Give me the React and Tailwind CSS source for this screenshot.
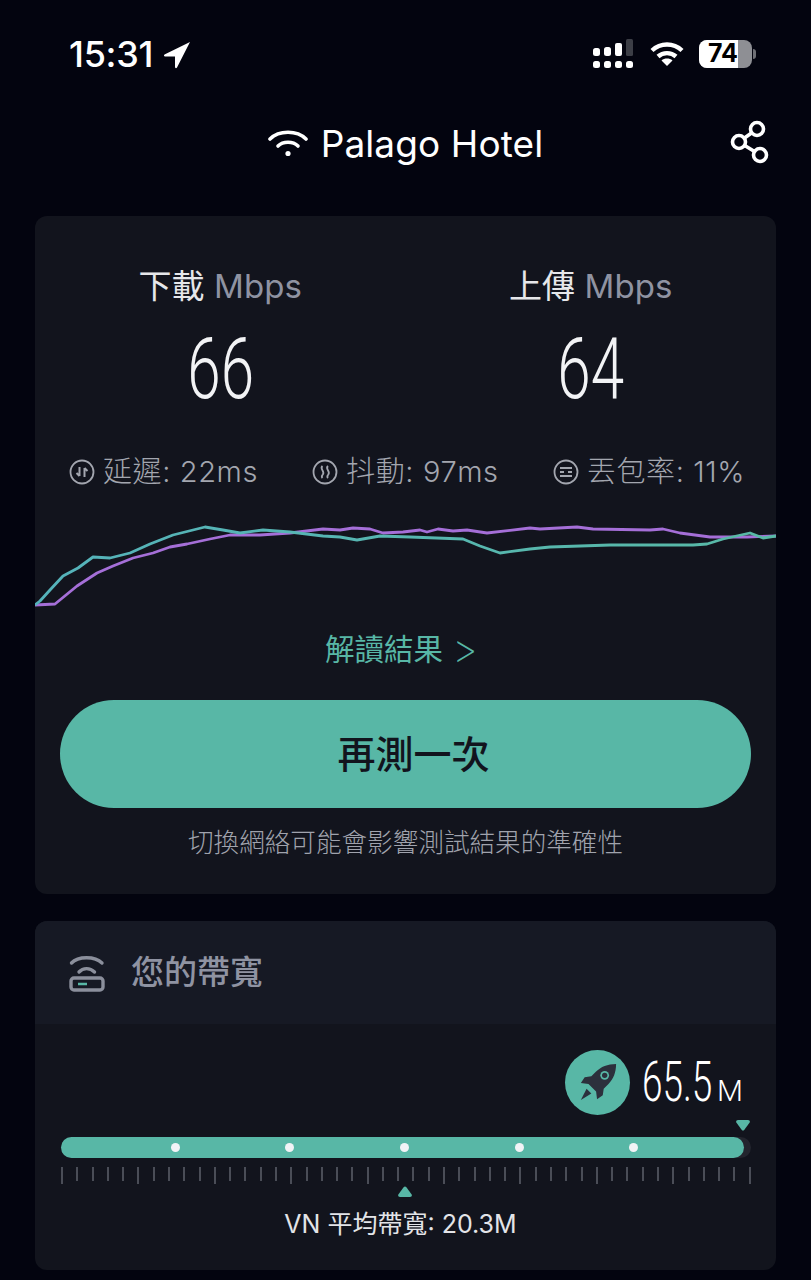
const TEAL_LINE = '35,604 40,600 50,589 63,575 78,567 93,556 110,557 130,552 150,543 173,534 205,526 223,529 240,532 263,529 290,531 323,535 340,536 357,539 380,535 410,536 463,538 480,545 500,552 530,548 550,546 610,544 693,544 707,543 723,538 750,532 763,537 776,535'
const PURPLE_LINE = '35,604 55,603 77,585 97,572 113,565 133,557 153,552 170,546 187,543 210,538 230,534 260,534 290,532 323,528 340,529 353,527 370,528 383,532 403,531 420,529 427,531 438,528 453,530 467,529 487,532 530,527 540,528 577,526 593,528 650,529 663,528 680,532 710,536 747,536 776,535'

const TICKS = Array.from({ length: 46 }, (_, i) => i)

function SignalIcon() {
  return (
    <svg width="40" height="29" viewBox="0 0 40 29">
      <rect x="0" y="9" width="7" height="8" rx="2.5" fill="#fff" />
      <rect x="11" y="8" width="7" height="9" rx="2.5" fill="#fff" />
      <rect x="22" y="4" width="7" height="13" rx="2" fill="#fff" />
      <rect x="33" y="0" width="7" height="17" rx="1.5" fill="#3c3e46" />
      <rect x="0" y="22" width="7" height="7" rx="2.5" fill="#fff" />
      <rect x="11" y="22" width="7" height="7" rx="2.5" fill="#fff" />
      <rect x="22" y="22" width="7" height="7" rx="2.5" fill="#fff" />
      <rect x="33" y="22" width="7" height="7" rx="2.5" fill="#fff" />
    </svg>
  )
}

function StatusWifi() {
  return (
    <svg width="34" height="24" viewBox="0 0 34 24" fill="none" stroke="#fff" strokeWidth="4.4">
      <path d="M2 8.5C10.5 .5 23.5 .5 32 8.5" />
      <path d="M8 14.5C13 10 21 10 26 14.5" />
      <path d="M17 24l-5.5-5.5c3-2.6 8-2.6 11 0z" fill="#fff" stroke="none" />
    </svg>
  )
}

function ShareIcon() {
  return (
    <svg width="40" height="44" viewBox="0 0 40 44" fill="none" stroke="#fff" strokeWidth="3.6">
      <circle cx="27" cy="9" r="6.5" />
      <circle cx="9" cy="22" r="6.5" />
      <circle cx="30" cy="35" r="6.5" />
      <path d="M21.5 13L14.5 18M14.7 25.5L24.5 31.5" />
    </svg>
  )
}

function LatencyIcon() {
  return (
    <svg width="26" height="26" viewBox="0 0 26 26" fill="none" stroke="#a3a6af" strokeWidth="1.8">
      <circle cx="13" cy="13" r="11.5" />
      <path d="M10.5 8v9M10.5 17l-3-3M15.5 18V9M15.5 9l3 3" strokeWidth="2" />
    </svg>
  )
}

function JitterIcon() {
  return (
    <svg width="26" height="26" viewBox="0 0 26 26" fill="none" stroke="#a3a6af" strokeWidth="1.8">
      <circle cx="13" cy="13" r="11.5" />
      <path d="M10.5 7c-3.500 3 3 5 .3 8.500-1 1.200-1.300 2.500-.3 3.500M16 7c-3.500 3 3 5 .3 8.500-1 1.200-1.300 2.500-.3 3.500" />
    </svg>
  )
}

function LossIcon() {
  return (
    <svg width="26" height="26" viewBox="0 0 26 26" fill="none" stroke="#a3a6af" strokeWidth="1.8">
      <circle cx="13" cy="13" r="11.5" />
      <path d="M7 9h12M7 13h4M15 13h4M7 17h12" />
    </svg>
  )
}

function RouterIcon() {
  return (
    <svg width="36" height="38" viewBox="0 0 36 38" fill="none" stroke="#8b8f9c" strokeWidth="3.4">
      <path d="M2.500 9C9 2 26 2 33 9" strokeLinecap="round" />
      <path d="M10 18C14 13.500 21 13.500 25.500 18" strokeLinecap="round" />
      <rect x="2" y="24" width="32" height="12" rx="3" />
      <path d="M9 30h9" stroke="#58b7a6" strokeWidth="2.600" />
    </svg>
  )
}

function RocketBadge() {
  return (
    <div className="flex h-[65px] w-[65px] items-center justify-center rounded-full bg-[#58b7a6]">
      <svg width="40" height="40" viewBox="0 0 42 42">
        <path d="M40 2C31 2 24 5 19 10L14 15 7 16 3 22 11 23 19 31 20 39 26 35 27 28 32 23C37 18 40 11 40 2Z" fill="#2c303c" />
        <path d="M9 28l5 5-11 7z" fill="#2c303c" />
        <circle cx="28" cy="14" r="4.600" fill="#58b7a6" />
        <circle cx="28" cy="14" r="2.800" fill="#2c303c" />
      </svg>
    </div>
  )
}

export default function App() {
  return (
    <div className="h-[1280px] overflow-hidden bg-[#03040f] font-['Inter','Noto_Sans_CJK_TC',sans-serif] text-white">
      {/* status bar */}
      <div className="flex h-[96px] items-start justify-between pl-[69px] pr-[55px] pt-[39px]">
        <div className="flex items-center gap-[10px]">
          <span className="text-[36px] font-medium leading-[30px] tracking-[-0.3px]">15:31</span>
          <svg width="28" height="28" viewBox="0 0 28 28" className="mt-[2px]">
            <path d="M27 1L1.500 13.500c-1 .8-.5 2 .5 2H12V26c0 1.500 1.500 1.500 2 .5z" fill="#fff" />
          </svg>
        </div>
        <div className="flex items-center">
          <SignalIcon />
          <div className="ml-[17px]"><StatusWifi /></div>
          <div className="ml-[15px] flex h-[28px] w-[53px] overflow-hidden rounded-[8px] bg-[#8e8f94]">
            <div className="flex h-full w-[39px] items-center bg-white pl-[9px]">
              <span className="text-[25px] font-bold leading-none text-black">74</span>
            </div>
          </div>
          <div className="ml-[1px] h-[10px] w-[3px] rounded-r-full bg-[#6f7076]" />
        </div>
      </div>

      {/* title */}
      <div className="relative mb-[26px] flex h-[94px] items-center justify-center">
        <div className="flex items-center gap-[13px]">
          <svg width="40" height="28" viewBox="0 0 40 28" fill="none" stroke="#fff" strokeWidth="3.600" strokeLinecap="round">
            <path d="M2 10C11 1 29 1 38 10" />
            <path d="M10 17C15 12 25 12 30 17" />
            <circle cx="20" cy="24.500" r="2.600" fill="#fff" stroke="none" />
          </svg>
          <span className="text-[37px] font-normal leading-none tracking-[0.1px]">Palago Hotel</span>
        </div>
        <div className="absolute right-[41px] top-[24px]"><ShareIcon /></div>
      </div>

      {/* result card */}
      <div className="mx-[35px] h-[678px] rounded-[12px] bg-[#12141d] pt-[51px]">
        <div className="grid grid-cols-2">
          <div className="flex flex-col items-center">
            <div className="text-[33px] leading-[38px] tracking-[0.1px] text-[#e6e7ea]">下載 <span className="text-[#8f93a2]">Mbps</span></div>
            <div className="mt-[20px] origin-center scale-x-[0.7] font-['Roboto',sans-serif] text-[86px] font-[350] leading-[88px] text-[#f2f3f5]">66</div>
          </div>
          <div className="flex flex-col items-center">
            <div className="text-[33px] leading-[38px] tracking-[0.1px] text-[#e6e7ea]">上傳 <span className="text-[#8f93a2]">Mbps</span></div>
            <div className="mt-[20px] origin-center scale-x-[0.7] font-['Roboto',sans-serif] text-[86px] font-[350] leading-[88px] text-[#f2f3f5]">64</div>
          </div>
        </div>

        <div className="mt-[41px] flex items-center justify-between pl-[34px] pr-[31px] text-[29px] font-light leading-[36px] tracking-[0.6px] text-[#a3a6af]">
          <div className="flex items-center gap-[8px]"><LatencyIcon /><span>延遲: 22ms</span></div>
          <div className="flex items-center gap-[8px]"><JitterIcon /><span>抖動: 97ms</span></div>
          <div className="flex items-center gap-[8px]"><LossIcon /><span>丟包率: 11%</span></div>
        </div>

        <svg viewBox="35 520 741 90" className="mt-[31px] block h-[90px] w-full" fill="none" strokeWidth="2.800" strokeLinejoin="round">
          <defs>
            <linearGradient id="tealLine" gradientUnits="userSpaceOnUse" x1="35" y1="0" x2="776" y2="0">
              <stop offset="0" stopColor="#55b3bb" />
              <stop offset="1" stopColor="#58b9a6" />
            </linearGradient>
          </defs>
          <polyline points={PURPLE_LINE} stroke="#a56fd8" />
          <polyline points={TEAL_LINE} stroke="url(#tealLine)" />
        </svg>

        <div className="mt-[19px] flex h-[38px] items-center justify-center gap-[9px] pr-[8px] leading-[38px] text-[#58b7a6]">
          <span className="text-[29.5px]">解讀結果</span>
          <span className="text-[40px] font-extralight">&gt;</span>
        </div>

        <div className="mx-[25px] mt-[32px] flex h-[108px] items-center justify-center rounded-full bg-[#58b7a6] pl-[16px] text-[38px] font-medium text-[#12141d]">再測一次</div>

        <div className="mt-[18px] text-center text-[25.6px] font-light leading-[34px] text-[#a0a3ad]">切換網絡可能會影響測試結果的準確性</div>
      </div>

      {/* bandwidth card */}
      <div className="mx-[35px] mt-[27px] h-[349px] overflow-hidden rounded-[12px] bg-[#12141d]">
        <div className="flex h-[103px] items-center gap-[26px] bg-[#161924] pl-[34px]">
          <RouterIcon />
          <span className="text-[33px] font-medium text-[#8f93a2]">您的帶寬</span>
        </div>

        <div className="px-[26px]">
          <div className="mt-[25px] flex h-[66px] items-center justify-end">
            <RocketBadge />
            <div className="ml-[12px] flex w-[108px] items-baseline">
              <span className="block w-[75px] origin-left scale-x-[0.66] whitespace-nowrap font-['Roboto',sans-serif] text-[56px] font-[350] leading-[56px]">65.5</span>
              <span className="font-['Roboto',sans-serif] text-[30px] font-[350] leading-none">M</span>
            </div>
          </div>

          <div className="flex h-[22px] justify-end pt-[5px]">
            <svg width="14" height="11" viewBox="0 0 14 11"><path d="M2 0h10c1.600 0 2.400 1.500 1.500 2.800L8.200 10c-.6 .8-1.800 .8-2.400 0L.5 2.800C-.4 1.500 .4 0 2 0z" fill="#58b7a6" /></svg>
          </div>

          <div className="flex h-[21px] w-[690px] rounded-full bg-[#23252e]">
            <div className="flex h-full w-[683px] items-center justify-evenly rounded-full bg-[#58b7a6] pl-[4px]">
              <span className="h-[9px] w-[9px] rounded-full bg-[#f1f3f6]" />
              <span className="h-[9px] w-[9px] rounded-full bg-[#f1f3f6]" />
              <span className="h-[9px] w-[9px] rounded-full bg-[#f1f3f6]" />
              <span className="h-[9px] w-[9px] rounded-full bg-[#f1f3f6]" />
              <span className="h-[9px] w-[9px] rounded-full bg-[#f1f3f6]" />
            </div>
          </div>

          <div className="mt-[9px] flex w-[690px] items-start justify-between">
            {TICKS.map(i => (
              <span key={i} className={i % 5 === 0 ? 'h-[17px] w-[2px] bg-[#4a4d57]' : 'h-[14px] w-[2px] bg-[#4a4d57]'} />
            ))}
          </div>

          <div className="ml-[337px] mt-[2px] flex h-[11px]">
            <svg width="14" height="11" viewBox="0 0 14 11"><path d="M2 11h10c1.600 0 2.400-1.500 1.500-2.800L8.200 1c-.6-.8-1.800-.8-2.400 0L.5 8.200C-.4 9.500 .4 11 2 11z" fill="#58b7a6" /></svg>
          </div>

          <div className="mt-[10px] pr-[10px] text-center text-[25px] leading-[34px] text-[#e3e4e8]">VN 平均帶寬: 20.3M</div>
        </div>
      </div>
    </div>
  )
}
